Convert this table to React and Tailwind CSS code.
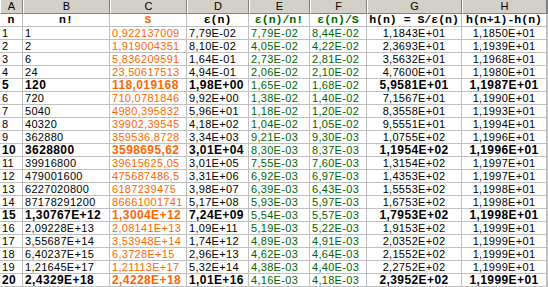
import React from "react";

const cols = "grid grid-cols-[23px_87px_77px_62px_61px_57px_95px_85px]";

const rows = [
  ["1", "1", "0,922137009", "7,79E-02", "7,79E-02", "8,44E-02", "1,1843E+01", "1,1850E+01"],
  ["2", "2", "1,919004351", "8,10E-02", "4,05E-02", "4,22E-02", "2,3693E+01", "1,1939E+01"],
  ["3", "6", "5,836209591", "1,64E-01", "2,73E-02", "2,81E-02", "3,5632E+01", "1,1968E+01"],
  ["4", "24", "23,50617513", "4,94E-01", "2,06E-02", "2,10E-02", "4,7600E+01", "1,1980E+01"],
  ["5", "120", "118,019168", "1,98E+00", "1,65E-02", "1,68E-02", "5,9581E+01", "1,1987E+01"],
  ["6", "720", "710,0781846", "9,92E+00", "1,38E-02", "1,40E-02", "7,1567E+01", "1,1990E+01"],
  ["7", "5040", "4980,395832", "5,96E+01", "1,18E-02", "1,20E-02", "8,3558E+01", "1,1993E+01"],
  ["8", "40320", "39902,39545", "4,18E+02", "1,04E-02", "1,05E-02", "9,5551E+01", "1,1994E+01"],
  ["9", "362880", "359536,8728", "3,34E+03", "9,21E-03", "9,30E-03", "1,0755E+02", "1,1996E+01"],
  ["10", "3628800", "3598695,62", "3,01E+04", "8,30E-03", "8,37E-03", "1,1954E+02", "1,1996E+01"],
  ["11", "39916800", "39615625,05", "3,01E+05", "7,55E-03", "7,60E-03", "1,3154E+02", "1,1997E+01"],
  ["12", "479001600", "475687486,5", "3,31E+06", "6,92E-03", "6,97E-03", "1,4353E+02", "1,1997E+01"],
  ["13", "6227020800", "6187239475", "3,98E+07", "6,39E-03", "6,43E-03", "1,5553E+02", "1,1998E+01"],
  ["14", "87178291200", "86661001741", "5,17E+08", "5,93E-03", "5,97E-03", "1,6753E+02", "1,1998E+01"],
  ["15", "1,30767E+12", "1,3004E+12", "7,24E+09", "5,54E-03", "5,57E-03", "1,7953E+02", "1,1998E+01"],
  ["16", "2,09228E+13", "2,08141E+13", "1,09E+11", "5,19E-03", "5,22E-03", "1,9153E+02", "1,1999E+01"],
  ["17", "3,55687E+14", "3,53948E+14", "1,74E+12", "4,89E-03", "4,91E-03", "2,0352E+02", "1,1999E+01"],
  ["18", "6,40237E+15", "6,3728E+15", "2,96E+13", "4,62E-03", "4,64E-03", "2,1552E+02", "1,1999E+01"],
  ["19", "1,21645E+17", "1,21113E+17", "5,32E+14", "4,38E-03", "4,40E-03", "2,2752E+02", "1,1999E+01"],
  ["20", "2,4329E+18", "2,4228E+18", "1,01E+16", "4,16E-03", "4,18E-03", "2,3952E+02", "1,1999E+01"],
];

const titles = [
  { t: "n", c: "text-black" },
  { t: "n!", c: "text-black" },
  { t: "S", c: "text-[#ff6600]" },
  { t: "ε(n)", c: "text-black" },
  { t: "ε(n)/n!", c: "text-[#006600]" },
  { t: "ε(n)/S", c: "text-[#006600]" },
  { t: "h(n) = S/ε(n)", c: "text-black" },
  { t: "h(n+1)-h(n)", c: "text-black" },
];

const cellBase =
  "h-[13px] border-r border-b border-[#c0c0c0] px-[2px] leading-[12px] whitespace-nowrap overflow-hidden";

export default function App() {
  return (
    <div className="w-[548px] h-[287px] bg-white overflow-hidden font-['Liberation_Sans',Arial,sans-serif] text-[11px] text-black">
      {/* column letters */}
      <div className={cols + " w-[548px] border-r border-[#808080]"}>
        {["A", "B", "C", "D", "E", "F", "G", "H"].map((l) => (
          <div
            key={l}
            className="h-[14px] bg-[#d4d0c8] border-r border-b border-r-[#808080] border-b-[#808080] border-l border-l-white text-center leading-[13px] text-[11px]"
          >
            {l}
          </div>
        ))}
      </div>

      {/* titles row */}
      <div className={cols + " w-[548px] border-r border-[#c0c0c0]"}>
        {titles.map((h) => (
          <div
            key={h.t}
            className={`${cellBase} text-center font-bold font-['Liberation_Mono',monospace] text-[11.5px] ${h.c}`}
          >
            {h.t}
          </div>
        ))}
      </div>

      {rows.map((r) => {
        const bold = Number(r[0]) % 5 === 0;
        return (
          <div key={r[0]} className={cols + " w-[548px] border-r border-[#c0c0c0]"}>
            {r.map((v, i) => {
              let color = "text-black";
              if (i === 2) color = "text-[#ff6600]";
              if (i === 4 || i === 5) color = "text-[#006600]";
              const isBold = bold && i !== 4 && i !== 5;
              const align = i >= 6 ? "text-center" : "text-left";
              return (
                <div
                  key={i}
                  className={`${cellBase} ${color} ${align} ${
                    isBold ? "font-bold text-[12px] tracking-[0.4px]" : "tracking-[0.3px]"
                  }`}
                >
                  {v}
                </div>
              );
            })}
          </div>
        );
      })}
    </div>
  );
}
